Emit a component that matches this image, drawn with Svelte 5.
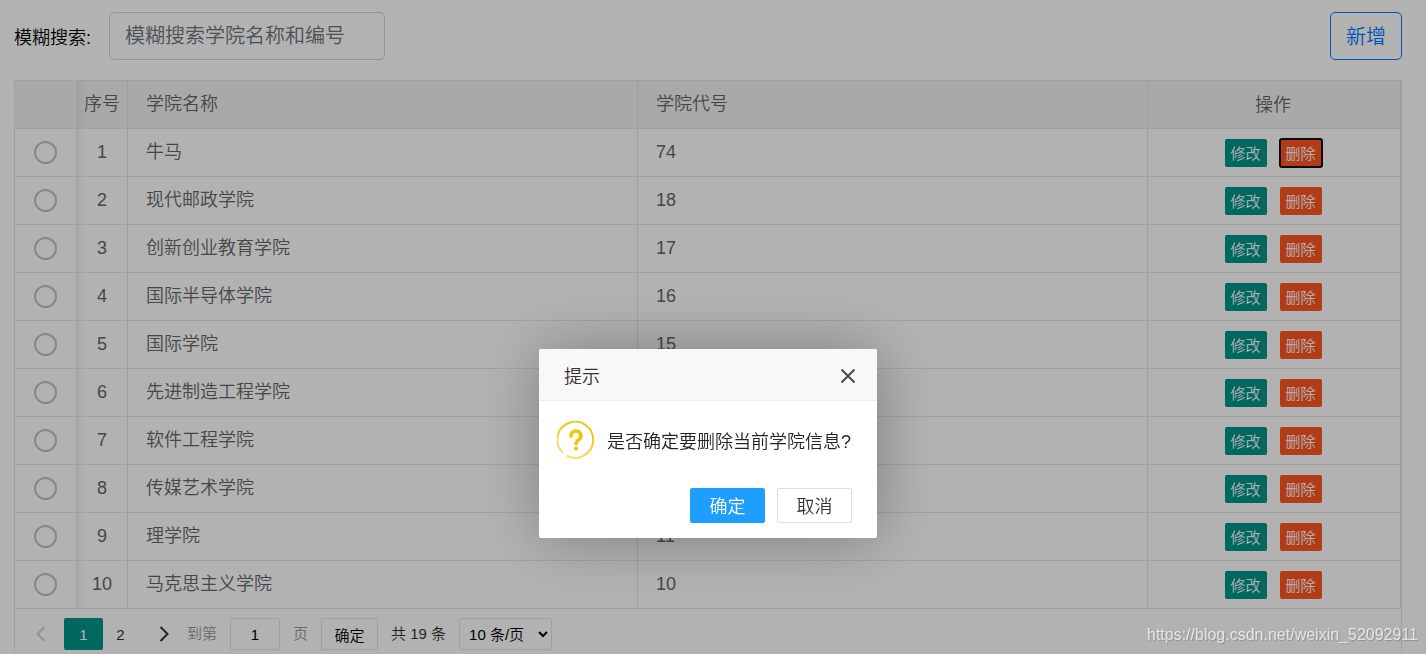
<script lang="ts">
  interface College { id: number; name: string; code: string; }

  const colleges: College[] = [
    { id: 1, name: '牛马', code: '74' },
    { id: 2, name: '现代邮政学院', code: '18' },
    { id: 3, name: '创新创业教育学院', code: '17' },
    { id: 4, name: '国际半导体学院', code: '16' },
    { id: 5, name: '国际学院', code: '15' },
    { id: 6, name: '先进制造工程学院', code: '14' },
    { id: 7, name: '软件工程学院', code: '13' },
    { id: 8, name: '传媒艺术学院', code: '12' },
    { id: 9, name: '理学院', code: '11' },
    { id: 10, name: '马克思主义学院', code: '10' },
  ];

  let keyword = $state('');
  let selected: number | null = $state(null);
  let deleting: number | null = $state(1);
  let page = $state(1);
  let jumpTo = $state('1');
  let limit = $state('10');

  function jump() {
    const n = Number(jumpTo);
    if (n >= 1 && n <= 2) page = n;
  }

  function closeDialog() {
    deleting = null;
  }
</script>

<div class="page">
  <div class="toolbar">
    <label for="keyword">模糊搜索:</label>
    <input id="keyword" class="search" type="text" placeholder="模糊搜索学院名称和编号" bind:value={keyword} />
    <button type="button" class="add">新增</button>
  </div>

  <div class="table-view">
    <table>
      <thead>
        <tr>
          <th class="col-radio"></th>
          <th class="col-no">序号</th>
          <th>学院名称</th>
          <th>学院代号</th>
          <th class="col-ops">操作</th>
        </tr>
      </thead>
      <tbody>
        {#each colleges as c (c.id)}
          <tr>
            <td class="col-radio"><input type="radio" name="college" value={c.id} bind:group={selected} aria-label={c.name} /></td>
            <td class="col-no">{c.id}</td>
            <td>{c.name}</td>
            <td>{c.code}</td>
            <td class="col-ops">
              <div class="ops">
                <button type="button" class="edit">修改</button>
                <button type="button" class="del" class:focused={deleting === c.id} onclick={() => deleting = c.id}>删除</button>
              </div>
            </td>
          </tr>
        {/each}
      </tbody>
    </table>

    <div class="pager">
      <button type="button" class="arrow prev" aria-label="上一页" disabled={page === 1} onclick={() => page = 1}>
        <svg width="10" height="16" viewBox="0 0 10 16"><path d="M8.500 1 1.500 8 8.500 15" /></svg>
      </button>
      <button type="button" class="num" class:active={page === 1} onclick={() => page = 1}>1</button>
      <button type="button" class="num" class:active={page === 2} onclick={() => page = 2}>2</button>
      <button type="button" class="arrow next" aria-label="下一页" disabled={page === 2} onclick={() => page = 2}>
        <svg width="10" height="16" viewBox="0 0 10 16"><path d="M1.500 1 8.500 8 1.500 15" /></svg>
      </button>
      <label class="skip">到第 <input type="text" bind:value={jumpTo} /> 页</label>
      <button type="button" class="go" onclick={jump}>确定</button>
      <span class="count">共 19 条</span>
      <select aria-label="每页条数" bind:value={limit}>
        <option value="10">10 条/页</option>
        <option value="20">20 条/页</option>
        <option value="30">30 条/页</option>
      </select>
    </div>
  </div>
</div>

{#if deleting !== null}
  <div class="mask">
    <div class="dialog" role="dialog" aria-labelledby="dialog-title">
      <div class="dialog-head">
        <span id="dialog-title">提示</span>
        <button type="button" class="close" aria-label="关闭" onclick={closeDialog}>
          <svg width="16" height="16" viewBox="0 0 16 16"><path d="M1.500 1.500 14.500 14.500M14.500 1.500 1.500 14.500" /></svg>
        </button>
      </div>
      <div class="dialog-body">
        <svg class="ask" width="38" height="38" viewBox="0 0 38 38">
          <defs>
            <linearGradient id="ring" x1="0.7" y1="0" x2="0.3" y2="1">
              <stop offset="0" stop-color="#f5c300" />
              <stop offset="0.5" stop-color="#f8cb26" />
              <stop offset="1" stop-color="#fbe07a" />
            </linearGradient>
          </defs>
          <path d="M5.800 31.800A18 18 0 1 1 9.500 34.500" stroke="url(#ring)" stroke-width="2" />
          <path d="M14 15.200a5 4.800 0 1 1 8 3.400c-2 1.300-3 2-3 4.200" stroke="#f5c300" stroke-width="3.400" stroke-linecap="round" />
          <circle cx="19" cy="27.500" r="2" fill="#f5c300" />
        </svg>
        <span>是否确定要删除当前学院信息?</span>
      </div>
      <div class="dialog-foot">
        <button type="button" class="ok" onclick={closeDialog}>确定</button>
        <button type="button" class="cancel" onclick={closeDialog}>取消</button>
      </div>
    </div>
  </div>
{/if}

<div class="watermark">https://blog.csdn.net/weixin_52092911</div>

<style>
  :global(body) {
    margin: 0;
    background: #fff;
    font-family: "Liberation Sans", "Noto Sans CJK SC", sans-serif;
    font-weight: 350;
  }

  button, input, select {
    box-sizing: border-box;
    margin: 0;
    font-family: inherit;
    font-weight: inherit;
  }

  button { padding: 0; cursor: pointer; }

  svg { display: block; fill: none; }

  .page {
    box-sizing: border-box;
    min-height: 100vh;
    padding: 12px 24px 0 14px;
    display: flex;
    flex-direction: column;
    gap: 20px;
  }

  .toolbar {
    display: flex;
    align-items: center;
    gap: 18px;
    font-size: 18px;
    color: #000;
  }

  .search {
    width: 276px;
    height: 48px;
    padding: 0 15px;
    border: 1px solid #ced4da;
    border-radius: 5px;
    background: #fff;
    font-size: 20px;
  }

  .search::placeholder { color: #6c757d; opacity: 1; }

  .add {
    height: 48px;
    margin-left: auto;
    padding: 0 15px 2px;
    border: 1px solid #007bff;
    border-radius: 5px;
    background: #fff;
    color: #007bff;
    font-size: 20px;
  }

  .table-view {
    flex: 1;
    border: 1px solid #e6e6e6;
    border-bottom: none;
  }

  table {
    width: 100%;
    table-layout: fixed;
    border-collapse: separate;
    border-spacing: 0;
    font-size: 18px;
    line-height: 24px;
    color: #666;
  }

  th, td {
    box-sizing: border-box;
    height: 48px;
    padding: 0 18px 2px;
    border-right: 1px solid #e6e6e6;
    border-bottom: 1px solid #e6e6e6;
    font-weight: inherit;
    text-align: left;
  }

  th { background-color: #f2f2f2; }

  .col-radio { width: 62px; padding: 0; text-align: center; }
  .col-no {
    width: 51px;
    padding: 0 0 2px;
    text-align: center;
    background-image: linear-gradient(to right, rgba(0, 0, 0, 0.05), transparent 8px);
  }
  .col-ops { width: 253px; padding: 0 2px 0 0; text-align: center; }

  td input {
    appearance: none;
    display: block;
    width: 23px;
    height: 23px;
    margin: 0 auto;
    border: 2px solid #c2c2c2;
    border-radius: 50%;
  }

  td input:checked { border-color: #5fb878; background: #5fb878; }

  .ops {
    display: flex;
    justify-content: center;
    gap: 13px;
  }

  .ops button {
    width: 42px;
    height: 28px;
    border: none;
    border-radius: 2px;
    color: #fff;
    font-size: 15px;
  }

  .edit { background: #009688; }
  .del { background: #ff5722; }
  .del.focused { outline: 2px solid #101010; outline-offset: -1px; }

  .pager {
    display: flex;
    align-items: center;
    padding: 9px 0 4px 12px;
    font-size: 15px;
    line-height: 22px;
    color: #333;
  }

  .pager button, .pager input, .pager select {
    height: 32px;
    border: none;
    border-radius: 2px;
    background: #fff;
    color: #000;
    font-size: 15px;
  }

  .pager .arrow {
    width: 37px;
    display: flex;
    align-items: center;
    justify-content: center;
    padding-right: 10px;
  }

  .pager .next { width: 49px; padding: 0 0 0 2px; }
  .arrow path { stroke: #333; stroke-width: 2; }
  .arrow:disabled path { stroke: #d2d2d2; }

  .pager .num { width: 35px; color: #333; }
  .pager .num.active { width: 39px; background: #009688; color: #fff; }

  .skip {
    display: flex;
    align-items: center;
    gap: 13px;
    padding-bottom: 0;
    color: #999;
  }

  .pager .skip input {
    width: 50px;
    border: 1px solid #e6e6e6;
    text-align: center;
  }

  .pager .go {
    width: 57px;
    margin: 0 13px;
    border: 1px solid #e6e6e6;
  }

  .pager select {
    width: 93px;
    margin-left: 13px;
    padding: 0 5px;
    border: 1px solid #e6e6e6;
  }

  .mask {
    position: fixed;
    inset: 0;
    display: flex;
    justify-content: center;
    align-items: flex-start;
    padding: 349px 10px 0 0;
    background: rgba(0, 0, 0, 0.3);
  }

  .dialog {
    width: 338px;
    border-radius: 2px;
    background: #fff;
    box-shadow: 1px 1px 62px rgba(0, 0, 0, 0.3);
    font-size: 18px;
    color: #333;
  }

  .dialog-head {
    display: flex;
    align-items: center;
    justify-content: space-between;
    height: 51px;
    padding: 0 21px 0 25px;
    border-bottom: 1px solid #eee;
    border-radius: 2px 2px 0 0;
    background: #f8f8f8;
  }

  .close { padding-top: 3px; border: none; background: none; }
  .close path { stroke: #4a4a55; stroke-width: 2; }

  .dialog-body {
    display: flex;
    align-items: center;
    gap: 12px;
    padding: 20px 18px 29px;
    color: #212529;
    white-space: nowrap;
  }

  .ask { flex: none; }

  .dialog-foot {
    display: flex;
    justify-content: flex-end;
    gap: 12px;
    padding: 0 25px 15px;
  }

  .dialog-foot button {
    width: 75px;
    height: 35px;
    padding-bottom: 2px;
    border: 1px solid #dedede;
    border-radius: 2px;
    background: #fff;
    color: #333;
    font-size: 18px;
  }

  .dialog-foot .ok {
    border-color: #1e9fff;
    background: #1e9fff;
    color: #fff;
  }

  .watermark {
    position: fixed;
    right: 8px;
    bottom: 10px;
    color: rgba(255, 255, 255, 0.7);
    font-size: 16px;
    line-height: 18px;
    text-shadow: 1px 1px 1px rgba(0, 0, 0, 0.2);
    pointer-events: none;
  }
</style>
